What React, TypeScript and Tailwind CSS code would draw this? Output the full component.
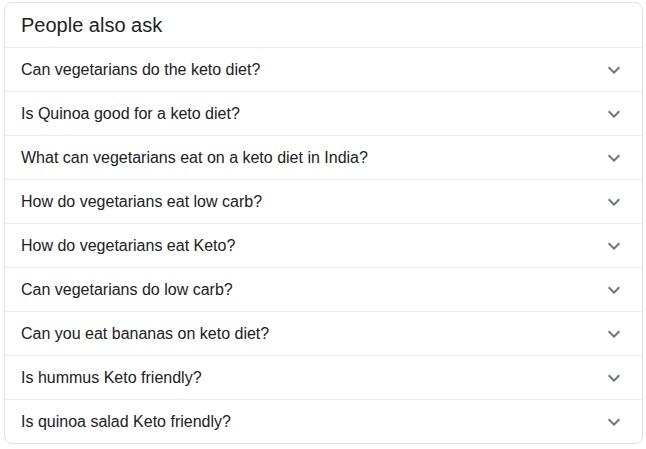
import React from 'react';

const questions = [
  'Can vegetarians do the keto diet?',
  'Is Quinoa good for a keto diet?',
  'What can vegetarians eat on a keto diet in India?',
  'How do vegetarians eat low carb?',
  'How do vegetarians eat Keto?',
  'Can vegetarians do low carb?',
  'Can you eat bananas on keto diet?',
  'Is hummus Keto friendly?',
  'Is quinoa salad Keto friendly?',
];

const Chevron = () => (
  <svg width="24" height="24" viewBox="0 0 24 24" className="fill-[#70757a]">
    <path d="M16.59 8.59L12 13.17 7.41 8.59 6 10l6 6 6-6z" />
  </svg>
);

export default function App() {
  return (
    <div className="bg-white w-[646px] h-[449px] pt-[2px] px-[4px] font-['Liberation_Sans',Arial,sans-serif]">
      <div className="w-[639px] border border-[#dfe1e5] rounded-lg overflow-hidden">
        <div className="h-[44px] flex items-center px-4 text-[20px] text-[#202124]">People also ask</div>
        {questions.map((q) => (
          <div key={q} className="h-[44px] border-t border-[#ebebeb] flex items-center justify-between pl-4 pr-[16px]">
            <span className="text-[16px] text-[#202124]">{q}</span>
            <Chevron />
          </div>
        ))}
      </div>
    </div>
  );
}
